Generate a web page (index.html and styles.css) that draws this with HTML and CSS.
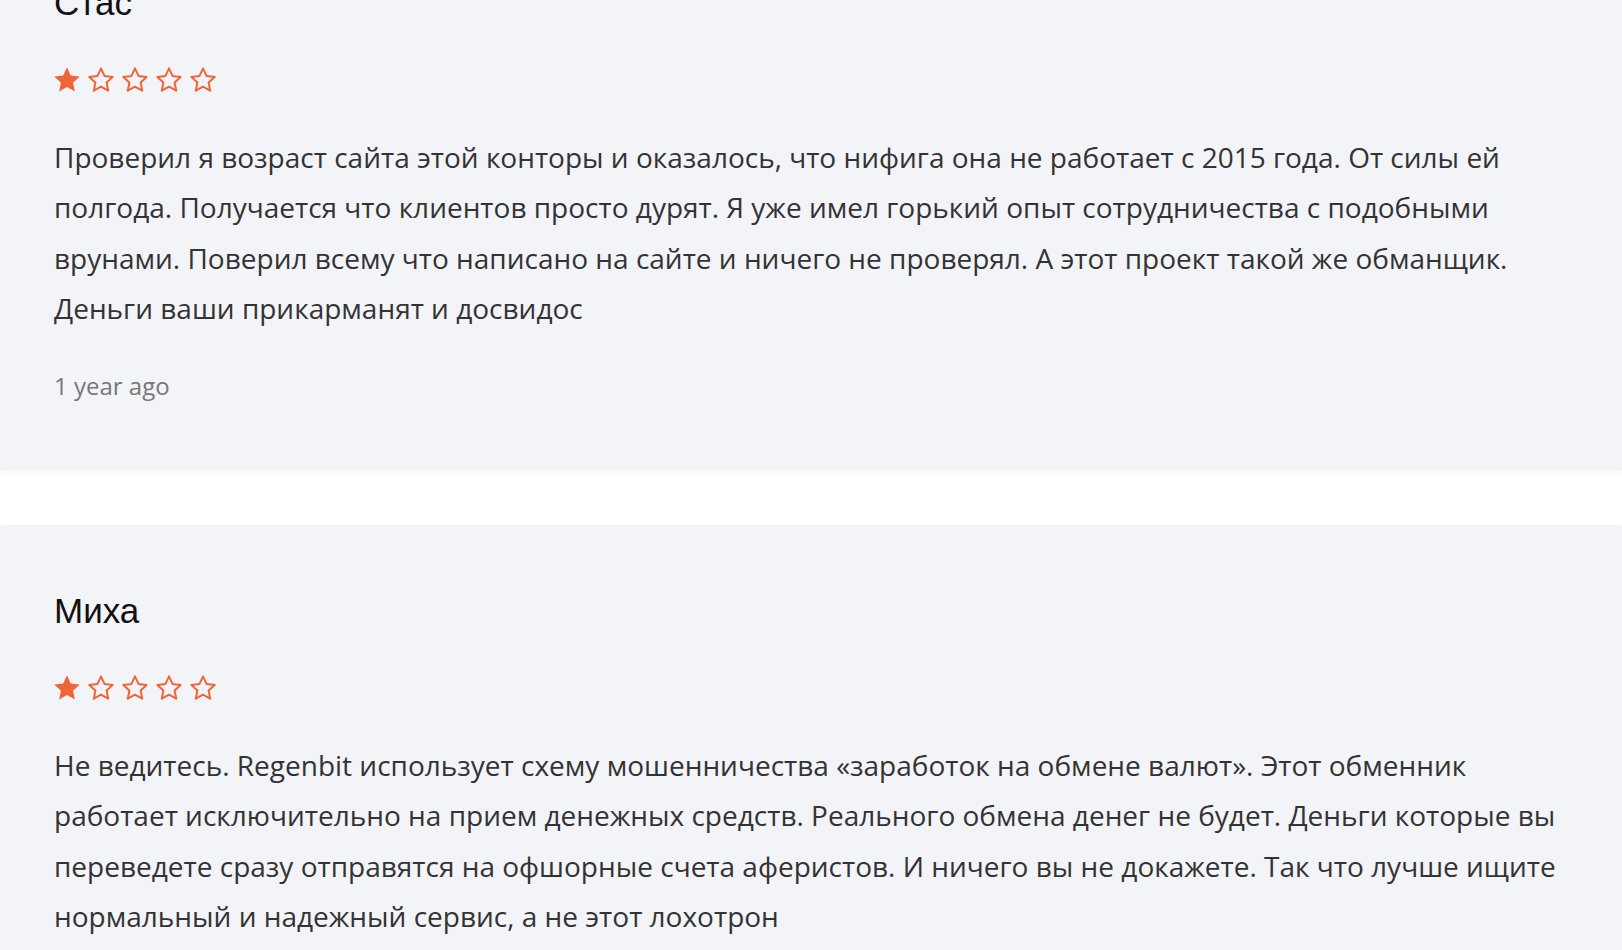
FILE: index.html
```html
<!DOCTYPE html>
<html lang="ru">
<head>
<meta charset="utf-8">
<title>Отзывы</title>
<link rel="stylesheet" href="styles.css">
</head>
<body>
<div class="reviews">
  <section class="review">
    <h3 class="review__name">Стас</h3>
    <div class="stars">
      <svg class="star" viewBox="0 0 26 25"><path class="star__full" d="M13 0.3L16.76 8.52 25.74 9.56 19.09 15.68 20.88 24.54 13 20.1 5.12 24.54 6.91 15.68 0.26 9.56 9.24 8.52z"/></svg>
      <svg class="star" viewBox="0 0 26 25"><path class="star__empty" d="M13 1.4L16.47 8.93 24.7 9.9 18.61 15.52 20.23 23.65 13 19.6 5.77 23.65 7.39 15.52 1.3 9.9 9.53 8.93z"/></svg>
      <svg class="star" viewBox="0 0 26 25"><path class="star__empty" d="M13 1.4L16.47 8.93 24.7 9.9 18.61 15.52 20.23 23.65 13 19.6 5.77 23.65 7.39 15.52 1.3 9.9 9.53 8.93z"/></svg>
      <svg class="star" viewBox="0 0 26 25"><path class="star__empty" d="M13 1.4L16.47 8.93 24.7 9.9 18.61 15.52 20.23 23.65 13 19.6 5.77 23.65 7.39 15.52 1.3 9.9 9.53 8.93z"/></svg>
      <svg class="star" viewBox="0 0 26 25"><path class="star__empty" d="M13 1.4L16.47 8.93 24.7 9.9 18.61 15.52 20.23 23.65 13 19.6 5.77 23.65 7.39 15.52 1.3 9.9 9.53 8.93z"/></svg>
    </div>
    <p class="review__text">Проверил я возраст сайта этой конторы и оказалось, что нифига она не работает с 2015 года. От силы ей полгода. Получается что клиентов просто дурят. Я уже имел горький опыт сотрудничества с подобными врунами. Поверил всему что написано на сайте и ничего не проверял. А этот проект такой же обманщик. Деньги ваши прикарманят и досвидос</p>
    <div class="review__date">1 year ago</div>
  </section>
  <section class="review">
    <h3 class="review__name">Миха</h3>
    <div class="stars">
      <svg class="star" viewBox="0 0 26 25"><path class="star__full" d="M13 0.3L16.76 8.52 25.74 9.56 19.09 15.68 20.88 24.54 13 20.1 5.12 24.54 6.91 15.68 0.26 9.56 9.24 8.52z"/></svg>
      <svg class="star" viewBox="0 0 26 25"><path class="star__empty" d="M13 1.4L16.47 8.93 24.7 9.9 18.61 15.52 20.23 23.65 13 19.6 5.77 23.65 7.39 15.52 1.3 9.9 9.53 8.93z"/></svg>
      <svg class="star" viewBox="0 0 26 25"><path class="star__empty" d="M13 1.4L16.47 8.93 24.7 9.9 18.61 15.52 20.23 23.65 13 19.6 5.77 23.65 7.39 15.52 1.3 9.9 9.53 8.93z"/></svg>
      <svg class="star" viewBox="0 0 26 25"><path class="star__empty" d="M13 1.4L16.47 8.93 24.7 9.9 18.61 15.52 20.23 23.65 13 19.6 5.77 23.65 7.39 15.52 1.3 9.9 9.53 8.93z"/></svg>
      <svg class="star" viewBox="0 0 26 25"><path class="star__empty" d="M13 1.4L16.47 8.93 24.7 9.9 18.61 15.52 20.23 23.65 13 19.6 5.77 23.65 7.39 15.52 1.3 9.9 9.53 8.93z"/></svg>
    </div>
    <p class="review__text">Не ведитесь. Regenbit использует схему мошенничества «заработок на обмене валют». Этот обменник работает исключительно на прием денежных средств. Реального обмена денег не будет. Деньги которые вы переведете сразу отправятся на офшорные счета аферистов. И ничего вы не докажете. Так что лучше ищите нормальный и надежный сервис, а не этот лохотрон</p>
    <div class="review__date">1 year ago</div>
  </section>
</div>
</body>
</html>
```

FILE: styles.css
```css
html, body {
  margin: 0;
  padding: 0;
  background: #ffffff;
  overflow: hidden;
}

.reviews {
  margin-top: -83px;
  display: flex;
  flex-direction: column;
  gap: 55px;
}

.review {
  background: #f3f4f8;
  padding: 65px 54px 69px;
  box-shadow: 0 2px 6px rgba(0, 0, 0, 0.04);
}

.review__name {
  margin: 0;
  font-family: "Liberation Sans", Arial, sans-serif;
  font-weight: 400;
  font-size: 35px;
  line-height: 42px;
  color: #111111;
}

.stars {
  display: flex;
  gap: 8px;
  margin-top: 43px;
  height: 25px;
}

.star {
  width: 26px;
  height: 25px;
  display: block;
}

.star__full {
  fill: #f06537;
}

.star__empty {
  fill: none;
  stroke: #f06537;
  stroke-width: 2;
  stroke-linejoin: round;
}

.review__text {
  margin: 40px 0 0;
  font-family: "Open Sans", sans-serif;
  font-size: 28px;
  line-height: 50.25px;
  color: #333333;
}

.review__date {
  margin-top: 38px;
  font-family: "Open Sans", sans-serif;
  font-size: 24px;
  line-height: 30px;
  color: #777777;
}
```
